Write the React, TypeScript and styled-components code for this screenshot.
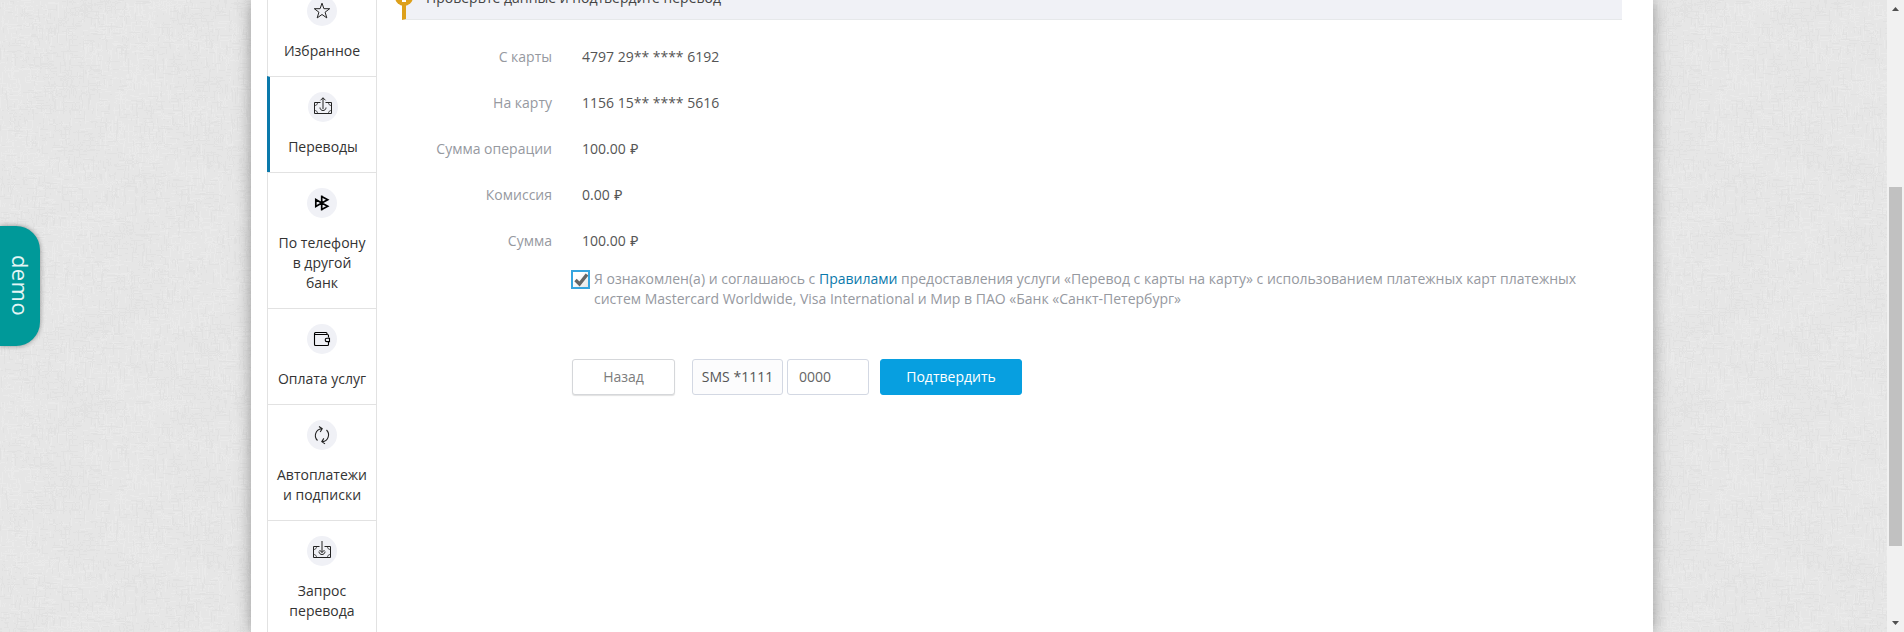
import React from 'react';
import styled, { createGlobalStyle, css } from 'styled-components';

const Global = createGlobalStyle`
  * { box-sizing: border-box; }
  html, body { margin: 0; padding: 0; overflow: hidden; }
  body { font: 14px/20px 'Open Sans', 'Noto Sans', sans-serif; color: #555; background: #e7e7e7; }
`;

const Page = styled.div`
  position: relative;
  display: flex;
  width: 100%;
  height: 632px;
  overflow: hidden;
`;
const Texture = styled.svg`
  position: absolute;
  inset: 0;
  width: 100%;
  height: 100%;
`;
const Viewport = styled.div`
  position: relative;
  flex: 1;
  display: flex;
  padding-left: 251px;
`;
const Sheet = styled.main`
  width: 1402px;
  height: 632px;
  display: flex;
  padding: 0 31px 0 16px;
  background: #fff;
  box-shadow: 0 0 15px rgba(0, 0, 0, 0.35);
`;

const Sidebar = styled.nav`
  width: 110px;
  height: 760px;
  margin-top: -20px;
  flex: none;
  border: solid #e2e2e2;
  border-width: 0 1px;
`;
const Item = styled.a<{ $active?: boolean }>`
  display: flex;
  flex-direction: column;
  align-items: center;
  gap: 15px;
  padding: 15px 5px;
  border-top: 1px solid #e2e2e2;
  text-align: center;
  color: #333;
  ${p => p.$active && css`
    margin-left: -1px;
    border-left: 3px solid #0b79ab;
    border-top-color: #e2e2e2;
    padding-left: 5px;
  `}
`;
const IconDisc = styled.span`
  display: flex;
  align-items: center;
  justify-content: center;
  width: 30px;
  height: 30px;
  border-radius: 50%;
  background: #f0f1f6;
`;
const ItemText = styled.span`
  white-space: pre-line;
`;

const Content = styled.section`
  flex: 1;
  display: flex;
  flex-direction: column;
  padding-left: 25px;
`;
const Notice = styled.header`
  position: relative;
  height: 60px;
  margin-top: -40px;
  padding: 28px 20px 0;
  background: #f0f1f6;
  border-left: 4px solid #dda01b;
  border-bottom: 1px solid #e6e8ea;
  color: #444;
`;
const Badge = styled.i`
  position: absolute;
  left: -11px;
  top: 28px;
  width: 18px;
  height: 18px;
  border-radius: 50%;
  background: #dda01b;
  &::after {
    content: '';
    position: absolute;
    left: 7px;
    top: 11px;
    width: 4px;
    height: 3px;
    background: #fff;
  }
`;

const Details = styled.dl`
  display: grid;
  grid-template-columns: 150px 1fr;
  column-gap: 30px;
  row-gap: 26px;
  margin: 27px 0 0;
`;
const Label = styled.dt`
  text-align: right;
  color: #96999f;
`;
const Value = styled.dd<{ $money?: boolean }>`
  margin: 0;
  word-spacing: ${p => (p.$money ? '1px' : 'normal')};
`;

const Agreement = styled.label`
  display: flex;
  align-items: flex-start;
  gap: 4px;
  margin: 18px 0 0 169px;
  color: #96999f;
`;
const Check = styled.span`
  display: flex;
  flex: none;
  width: 19px;
  height: 19px;
  margin-top: 1px;
  border: 2px solid #36a5df;
  background: linear-gradient(135deg, #fff 30%, #e6e6e6);
`;
const RulesText = styled.span`
  width: 990px;
`;
const RulesLink = styled.a`
  color: #0b79ab;
`;

const Actions = styled.div`
  display: flex;
  margin: 50px 0 0 170px;
`;
const Button = styled.button<{ $primary?: boolean }>`
  width: ${p => (p.$primary ? 142 : 103)}px;
  height: 36px;
  padding: 0;
  font: inherit;
  border-radius: 3px;
  border: 1px solid ${p => (p.$primary ? '#079fe0' : '#d5d7da')};
  color: ${p => (p.$primary ? '#fff' : '#7c7c7c')};
  background: ${p => (p.$primary ? '#079fe0' : '#fff')};
  box-shadow: ${p => (p.$primary ? 'none' : '0 1px 1px rgba(0,0,0,.12)')};
`;
const SmsLabel = styled.span`
  width: 91px;
  height: 36px;
  margin-left: 17px;
  padding: 7px 0;
  text-align: center;
  border: 1px solid #d3d8e3;
  border-radius: 3px;
  background: #fcfcfd;
`;
const CodeInput = styled.input`
  width: 82px;
  height: 36px;
  margin: 0 11px 0 4px;
  padding: 0 11px 1px;
  font: inherit;
  color: #666;
  border: 1px solid #d3d8e3;
  border-radius: 3px;
`;

const DemoTab = styled.div`
  position: absolute;
  left: 0;
  top: 226px;
  width: 40px;
  height: 120px;
  display: flex;
  align-items: center;
  justify-content: center;
  padding-left: 1px;
  writing-mode: vertical-rl;
  border-radius: 0 24px 24px 0;
  background: #009999;
  color: #e4f5f5;
  font-size: 22px;
  line-height: 40px;
  letter-spacing: 0.4px;
  box-shadow: 0 0 5px rgba(0, 0, 0, 0.4);
`;

const Scrollbar = styled.aside`
  position: relative;
  width: 17px;
  display: flex;
  flex-direction: column;
  align-items: center;
  background: #f1f1f1;
`;
const Arrow = styled.svg`
  width: 17px;
  height: 17px;
  flex: none;
`;
const Thumb = styled.div`
  width: 13px;
  height: 359px;
  margin: 170px 0 69px;
  background: #c1c1c1;
`;

/* Woven linen: short one-pixel threads, light and dark, on one tile. */
const TILE = 400;
const threads = (() => {
  let s = 7;
  const rnd = () => ((s = (s * 16807) % 2147483647) / 2147483647);
  const out = ['', ''];
  for (let i = 0; i < 13000; i++) {
    const x = Math.floor(rnd() * TILE);
    const y = Math.floor(rnd() * TILE);
    const len = 2 + Math.floor(rnd() * rnd() * 14);
    const shade = Math.sin(x / 21 + Math.sin(y / 17) * 2) * Math.cos(y / 25) * 0.5 + rnd() > 0.5 ? 0 : 1;
    out[shade] += rnd() < 0.5 ? `M${x} ${y}h${len}v1h-${len}z` : `M${x} ${y}v${len}h1v-${len}z`;
  }
  return out;
})();

const Linen = () => (
  <Texture>
    <defs>
      <pattern id="linen" width={TILE} height={TILE} patternUnits="userSpaceOnUse">
        <rect width={TILE} height={TILE} fill="#e6e6e6" />
        <path d={threads[0]} fill="#ebebeb" fillOpacity=".85" />
        <path d={threads[1]} fill="#e0e0e0" fillOpacity=".8" />
      </pattern>
    </defs>
    <rect width="100%" height="100%" fill="url(#linen)" />
  </Texture>
);

const Icon = ({ children, w = 1 }: { children: React.ReactNode; w?: number }) => (
  <svg width="20" height="20" viewBox="0 0 20 20" fill="none" stroke="#222" strokeWidth={w}>
    {children}
  </svg>
);
const Star = () => (
  <Icon><path d="M10 2.2l1.900 5.500h5.800l-4.600 3.500 1.700 5.700-4.800-3.400-4.800 3.400 1.700-5.700-4.600-3.500h5.800z" /></Icon>
);
const Banknote = () => (
  <>
    <path d="M7.500 5.500h-6v11h17v-11h-6" />
    <path d="M1.500 8.500c2 0 3-1 3-3M18.500 8.500c-2 0-3-1-3-3M1.500 13.500c2 0 3 1 3 3M18.500 13.500c-2 0-3 1-3 3" strokeWidth=".8" />
    <path d="M7 10.500c0 4 6 4 6 0" />
  </>
);
const SendIcon = () => (
  <Icon><Banknote /><path d="M10 12V.8M7.500 3.300L10 .8l2.500 2.500" /></Icon>
);
const RequestIcon = () => (
  <Icon><Banknote /><path d="M10 0v11.500M7.500 9l2.500 2.500 2.500-2.500" /></Icon>
);
const FastPayIcon = () => (
  <Icon w={1.7}>
    <path d="M9.700 2.500v15M3.800 6.500v7l5.900-3.500zM9.700 3.500l6 3.200-6 3.300 6 3.300-6 3.200" stroke="#000" />
  </Icon>
);
const WalletIcon = () => (
  <Icon w={1.1}>
    <path d="M16.500 8.500V6.500q0-1-1-1h-12q-1 0-1-1t1-1h10.500q1 0 1 1v1M2.500 4.500v11q0 1 1 1h12q1 0 1-1v-2.500" stroke="#000" />
    <path d="M17.500 9.200h-2.600a1.700 1.700 0 000 3.400h2.600z" stroke="#000" />
  </Icon>
);
const RepeatIcon = () => (
  <Icon w={1.100}>
    <path d="M5.500 15.500A6.800 6.800 0 019.500 3.800M7 1.500l3.200 2.200-2 3.300M14.500 5a6.800 6.800 0 01-4 11.600M13 18.900l-3.200-2.200 2-3.300" />
  </Icon>
);

const menu: { text: string; icon: React.ReactNode; active?: boolean }[] = [
  { text: 'Избранное', icon: <Star /> },
  { text: 'Переводы', icon: <SendIcon />, active: true },
  { text: 'По телефону\nв другой\nбанк', icon: <FastPayIcon /> },
  { text: 'Оплата услуг', icon: <WalletIcon /> },
  { text: 'Автоплатежи\nи подписки', icon: <RepeatIcon /> },
  { text: 'Запрос\nперевода', icon: <RequestIcon /> },
];

const details = [
  ['С карты', '4797 29** **** 6192'],
  ['На карту', '1156 15** **** 5616'],
  ['Сумма операции', '100.00 ₽'],
  ['Комиссия', '0.00 ₽'],
  ['Сумма', '100.00 ₽'],
];

export default function App() {
  return (
    <Page>
      <Global />
      <Linen />
      <Viewport>
        <Sheet>
          <Sidebar>
            {menu.map(m => (
              <Item key={m.text} $active={m.active}>
                <IconDisc>{m.icon}</IconDisc>
                <ItemText>{m.text}</ItemText>
              </Item>
            ))}
          </Sidebar>
          <Content>
            <Notice>
              <Badge />
              Проверьте данные и подтвердите перевод
            </Notice>
            <Details>
              {details.map(([label, value]) => (
                <React.Fragment key={label}>
                  <Label>{label}</Label>
                  <Value $money={value.endsWith('₽')}>{value}</Value>
                </React.Fragment>
              ))}
            </Details>
            <Agreement>
              <Check>
                <svg width="15" height="15" viewBox="0 0 15 15">
                  <path d="M2.500 8l4 4L14 2.500" fill="none" stroke="#666" strokeWidth="3.400" />
                </svg>
              </Check>
              <RulesText>
                Я ознакомлен(а) и соглашаюсь с <RulesLink>Правилами</RulesLink> предоставления услуги «Перевод с
                карты на карту» с использованием платежных карт платежных систем Mastercard Worldwide, Visa
                International и Мир в ПАО «Банк «Санкт-Петербург»
              </RulesText>
            </Agreement>
            <Actions>
              <Button>Назад</Button>
              <SmsLabel>SMS *1111</SmsLabel>
              <CodeInput defaultValue="0000" />
              <Button $primary>Подтвердить</Button>
            </Actions>
          </Content>
        </Sheet>
        <DemoTab>demo</DemoTab>
      </Viewport>
      <Scrollbar>
        <Arrow viewBox="0 0 17 17"><path d="M5 11h7L8.500 7z" fill="#505050" /></Arrow>
        <Thumb />
        <Arrow viewBox="0 0 17 17"><path d="M5 6h7L8.500 10z" fill="#505050" /></Arrow>
      </Scrollbar>
    </Page>
  );
}
